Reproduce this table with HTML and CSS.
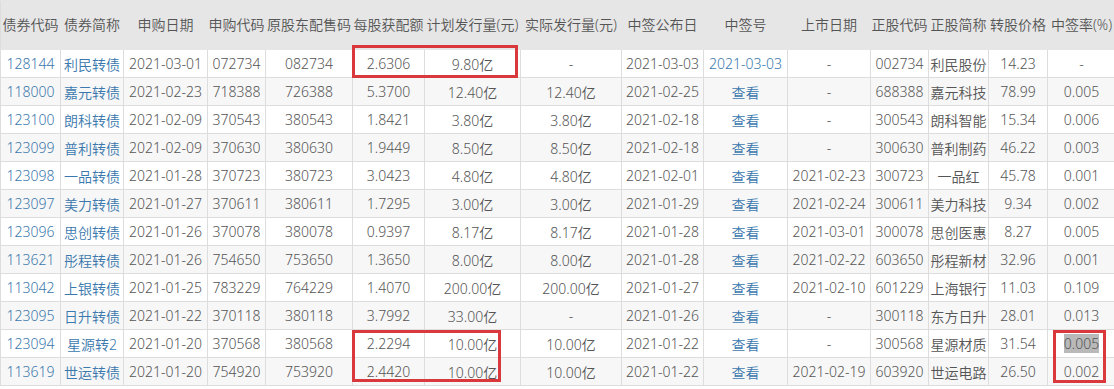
FILE: index.html
```html
<!DOCTYPE html>
<html lang="zh-CN">
<head>
<meta charset="utf-8">
<title>可转债申购</title>
<link rel="stylesheet" href="styles.css">
</head>
<body>
<div class="wrap">
<table class="bond-table">
<colgroup>
<col class="c1"><col class="c2"><col class="c3"><col class="c4"><col class="c5"><col class="c6"><col class="c7"><col class="c8"><col class="c9"><col class="c10"><col class="c11"><col class="c12"><col class="c13"><col class="c14"><col class="c15">
</colgroup>
<thead>
<tr><th>债券代码</th><th>债券简称</th><th>申购日期</th><th>申购代码</th><th>原股东配售码</th><th>每股获配额</th><th>计划发行量(元)</th><th>实际发行量(元)</th><th>中签公布日</th><th>中签号</th><th>上市日期</th><th>正股代码</th><th>正股简称</th><th>转股价格</th><th>中签率(%)</th></tr>
</thead>
<tbody>
<tr><td><a>128144</a></td><td><a>利民转债</a></td><td>2021-03-01</td><td>072734</td><td>082734</td><td>2.6306</td><td>9.80亿</td><td>-</td><td>2021-03-03</td><td><a>2021-03-03</a></td><td>-</td><td>002734</td><td>利民股份</td><td>14.23</td><td>-</td></tr>
<tr><td><a>118000</a></td><td><a>嘉元转债</a></td><td>2021-02-23</td><td>718388</td><td>726388</td><td>5.3700</td><td>12.40亿</td><td>12.40亿</td><td>2021-02-25</td><td><a>查看</a></td><td>-</td><td>688388</td><td>嘉元科技</td><td>78.99</td><td>0.005</td></tr>
<tr><td><a>123100</a></td><td><a>朗科转债</a></td><td>2021-02-09</td><td>370543</td><td>380543</td><td>1.8421</td><td>3.80亿</td><td>3.80亿</td><td>2021-02-18</td><td><a>查看</a></td><td>-</td><td>300543</td><td>朗科智能</td><td>15.34</td><td>0.006</td></tr>
<tr><td><a>123099</a></td><td><a>普利转债</a></td><td>2021-02-09</td><td>370630</td><td>380630</td><td>1.9449</td><td>8.50亿</td><td>8.50亿</td><td>2021-02-18</td><td><a>查看</a></td><td>-</td><td>300630</td><td>普利制药</td><td>46.22</td><td>0.003</td></tr>
<tr><td><a>123098</a></td><td><a>一品转债</a></td><td>2021-01-28</td><td>370723</td><td>380723</td><td>3.0423</td><td>4.80亿</td><td>4.80亿</td><td>2021-02-01</td><td><a>查看</a></td><td>2021-02-23</td><td>300723</td><td>一品红</td><td>45.78</td><td>0.001</td></tr>
<tr><td><a>123097</a></td><td><a>美力转债</a></td><td>2021-01-27</td><td>370611</td><td>380611</td><td>1.7295</td><td>3.00亿</td><td>3.00亿</td><td>2021-01-29</td><td><a>查看</a></td><td>2021-02-24</td><td>300611</td><td>美力科技</td><td>9.34</td><td>0.002</td></tr>
<tr><td><a>123096</a></td><td><a>思创转债</a></td><td>2021-01-26</td><td>370078</td><td>380078</td><td>0.9397</td><td>8.17亿</td><td>8.17亿</td><td>2021-01-28</td><td><a>查看</a></td><td>2021-03-01</td><td>300078</td><td>思创医惠</td><td>8.27</td><td>0.005</td></tr>
<tr><td><a>113621</a></td><td><a>彤程转债</a></td><td>2021-01-26</td><td>754650</td><td>753650</td><td>1.3650</td><td>8.00亿</td><td>8.00亿</td><td>2021-01-28</td><td><a>查看</a></td><td>2021-02-22</td><td>603650</td><td>彤程新材</td><td>32.96</td><td>0.001</td></tr>
<tr><td><a>113042</a></td><td><a>上银转债</a></td><td>2021-01-25</td><td>783229</td><td>764229</td><td>1.4070</td><td>200.00亿</td><td>200.00亿</td><td>2021-01-27</td><td><a>查看</a></td><td>2021-02-10</td><td>601229</td><td>上海银行</td><td>11.03</td><td>0.109</td></tr>
<tr><td><a>123095</a></td><td><a>日升转债</a></td><td>2021-01-22</td><td>370118</td><td>380118</td><td>3.7992</td><td>33.00亿</td><td>-</td><td>2021-01-26</td><td><a>查看</a></td><td>-</td><td>300118</td><td>东方日升</td><td>28.01</td><td>0.013</td></tr>
<tr><td><a>123094</a></td><td><a>星源转2</a></td><td>2021-01-20</td><td>370568</td><td>380568</td><td>2.2294</td><td>10.00亿</td><td>10.00亿</td><td>2021-01-22</td><td><a>查看</a></td><td>-</td><td>300568</td><td>星源材质</td><td>31.54</td><td><span class="sel">0.005</span></td></tr>
<tr><td><a>113619</a></td><td><a>世运转债</a></td><td>2021-01-20</td><td>754920</td><td>753920</td><td>2.4420</td><td>10.00亿</td><td>10.00亿</td><td>2021-01-22</td><td><a>查看</a></td><td>2021-02-19</td><td>603920</td><td>世运电路</td><td>26.50</td><td>0.002</td></tr>
</tbody>
</table>
<div class="mark mark-a"></div>
<div class="mark mark-b"></div>
<div class="mark mark-c"></div>
</div>
</body>
</html>
```

FILE: styles.css
```css
html, body {
  margin: 0;
  padding: 0;
  background: #ffffff;
}

.wrap {
  position: relative;
  width: 1114px;
  overflow: hidden;
}

.bond-table {
  width: 1115px;
  table-layout: fixed;
  border-collapse: collapse;
  font-family: "Noto Sans", "Noto Sans CJK SC", sans-serif;
  font-size: 14px;
  font-weight: 350;
  color: #555555;
}

.c1 { width: 60px; }
.c2 { width: 63px; }
.c3 { width: 84px; }
.c4 { width: 58px; }
.c5 { width: 87px; }
.c6 { width: 72px; }
.c7 { width: 96px; }
.c8 { width: 101px; }
.c9 { width: 82px; }
.c10 { width: 84px; }
.c11 { width: 83px; }
.c12 { width: 58px; }
.c13 { width: 60px; }
.c14 { width: 59px; }
.c15 { width: 68px; }

.bond-table th {
  height: 46px;
  padding: 0 0 2px;
  font-weight: 350;
  background: #e6e6e6;
  border: 1px solid #e6e6e6;
  white-space: nowrap;
  text-align: center;
  vertical-align: middle;
}

.bond-table th:first-child {
  border-left-color: #dddddd;
}

.bond-table td {
  height: 27px;
  padding: 0;
  border: 1px solid #dddddd;
  text-align: center;
  vertical-align: middle;
  white-space: nowrap;
  background: #ffffff;
}

.bond-table tbody tr:nth-child(even) td {
  background: #f7f7f7;
}

.bond-table a {
  color: #3a78ad;
  text-decoration: none;
}

.sel {
  background: #b9b9b9;
}

.mark {
  position: absolute;
  border: 3px solid #d9383d;
  box-sizing: border-box;
}

.mark-a { left: 352px; top: 45px; width: 166px; height: 33px; }
.mark-b { left: 352px; top: 330px; width: 149px; height: 52px; }
.mark-c { left: 1053px; top: 330px; width: 53px; height: 53px; }
```
